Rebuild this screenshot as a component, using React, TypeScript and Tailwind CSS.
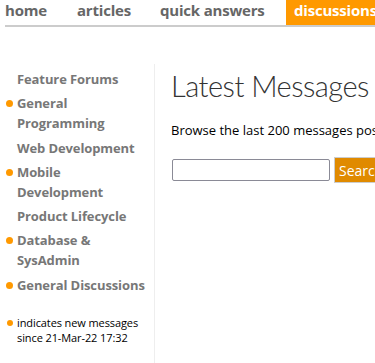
import React from "react";

const F = { fontFamily: '"Open Sans", "Noto Sans", Arial, sans-serif' };

function Dot({ small }: { small?: boolean }) {
  return (
    <span
      className={
        small
          ? "block w-[6px] h-[6px] rounded-full bg-[#f90]"
          : "block w-[7px] h-[7px] rounded-full bg-[#f90]"
      }
    />
  );
}

function Item({ lines, dot }: { lines: string[]; dot?: boolean }) {
  return (
    <div className="flex">
      <div className="w-[17px] shrink-0 pl-[6px] pt-[7px]">{dot ? <Dot /> : null}</div>
      <div className="text-[13px] font-bold text-[#777] leading-[20px] tracking-[-0.1px]">
        {lines.map((l, i) => (
          <div key={i}>{l}</div>
        ))}
      </div>
    </div>
  );
}

export default function App() {
  return (
    <div className="w-[375px] h-[363px] overflow-hidden bg-white" style={F}>
      <div className="pl-[5px]">
        <div className="flex h-[25px] border-b-2 border-[#ccc] box-content">
          <div className="flex h-full text-[15px] font-bold text-[#666] whitespace-nowrap tracking-[-0.2px] leading-[20px]">
            <span className="w-[72px]">home</span>
            <span className="w-[83px]">articles</span>
            <span className="w-[126px]">quick answers</span>
            <span className="bg-[#f90] text-white h-full pl-[8px] pr-[20px]">discussions</span>
          </div>
        </div>
      </div>
      <div className="flex mt-[37px]">
        <div className="w-[155px] shrink-0 border-r border-[#eee] h-[300px] pt-[5px]">
          <div className="flex flex-col gap-[4.3px]">
            <Item lines={["Feature Forums"]} />
            <Item lines={["General", "Programming"]} dot />
            <Item lines={["Web Development"]} />
            <Item lines={["Mobile", "Development"]} dot />
            <Item lines={["Product Lifecycle"]} />
            <Item lines={["Database &", "SysAdmin"]} dot />
            <Item lines={["General Discussions"]} dot />
          </div>
          <div className="flex mt-[20px]">
            <div className="w-[17px] shrink-0 pl-[7px] pt-[5px]">
              <Dot small />
            </div>
            <div className="text-[11px] leading-[15px] text-black tracking-[-0.1px]">
              <div>indicates new messages</div>
              <div>since 21-Mar-22 17:32</div>
            </div>
          </div>
        </div>
        <div className="pl-[16px] min-w-0 flex-1 whitespace-nowrap overflow-hidden">
          <div
            className="text-[29px] font-light text-[#333] leading-[44px] tracking-[-0.5px]"
            style={{ fontFamily: 'Lato, "Open Sans", sans-serif' }}
          >
            Latest Messages
          </div>
          <div className="mt-[13px] text-[13px] text-black leading-[18px]">
            Browse the last 200 messages posted in our forums
          </div>
          <div className="flex items-center mt-[18px]">
            <div className="shrink-0 w-[158px] h-[22px] border border-[#8a8a96] rounded-[2px] ml-[1px]" />
            <div className="shrink-0 ml-[4px] h-[26px] w-[80px] bg-[#e08a00] border border-[#ccc] text-white text-[14px] flex items-center pl-[4px]">
              Search
            </div>
          </div>
        </div>
      </div>
    </div>
  );
}
